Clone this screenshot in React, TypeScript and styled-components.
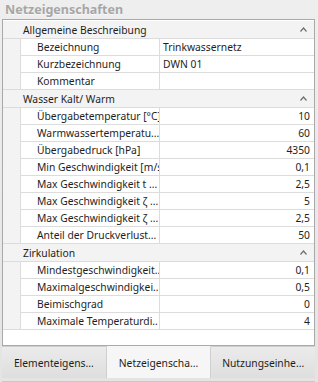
import React from "react";
import styled, { createGlobalStyle } from "styled-components";

interface Prop {
  name: string;
  value: string;
  align?: "left" | "right";
}

interface Category {
  title: string;
  props: Prop[];
}

const data: Category[] = [
  {
    title: "Allgemeine Beschreibung",
    props: [
      { name: "Bezeichnung", value: "Trinkwassernetz" },
      { name: "Kurzbezeichnung", value: "DWN 01" },
      { name: "Kommentar", value: "" },
    ],
  },
  {
    title: "Wasser Kalt/ Warm",
    props: [
      { name: "Übergabetemperatur [°C]", value: "10", align: "right" },
      { name: "Warmwassertemperatu...", value: "60", align: "right" },
      { name: "Übergabedruck [hPa]", value: "4350", align: "right" },
      { name: "Min Geschwindigkeit [m/s]", value: "0,1", align: "right" },
      { name: "Max Geschwindigkeit t ...", value: "2,5", align: "right" },
      { name: "Max Geschwindigkeit ζ ...", value: "5", align: "right" },
      { name: "Max Geschwindigkeit ζ ...", value: "2,5", align: "right" },
      { name: "Anteil der Druckverlust...", value: "50", align: "right" },
    ],
  },
  {
    title: "Zirkulation",
    props: [
      { name: "Mindestgeschwindigkeit..", value: "0,1", align: "right" },
      { name: "Maximalgeschwindigkei..", value: "0,5", align: "right" },
      { name: "Beimischgrad", value: "0", align: "right" },
      { name: "Maximale Temperaturdi..", value: "4", align: "right" },
    ],
  },
];

const tabs = ["Elementeigens...", "Netzeigenscha...", "Nutzungseinhe..."];

const GlobalStyle = createGlobalStyle`
  html, body {
    margin: 0;
    padding: 0;
    background: #e9e9e9;
  }
  body {
    font-family: "Noto Sans", "Open Sans", sans-serif;
    font-size: 10.3px;
    color: #1e1e1e;
  }
`;

const Window = styled.div`
  width: 318px;
  height: 382px;
  display: flex;
  flex-direction: column;
  background: linear-gradient(#eeeeee, #e4e4e4);
  overflow: hidden;
`;

const TitleBar = styled.div`
  height: 19px;
  flex-shrink: 0;
  display: flex;
  align-items: center;
  padding-left: 5px;
  font-weight: bold;
  font-size: 12.5px;
  color: #a6a6a6;
  text-shadow: 0 1px 0 #f8f8f8;
`;

const Panel = styled.div`
  flex: 1;
  margin: 0 3px 0 2px;
  border: 1px solid #a9a9a9;
  background: #ffffff;
  padding-top: 1px;
  overflow: hidden;
`;

const CategoryRow = styled.div`
  height: 17px;
  display: flex;
  align-items: center;
  padding-left: 20px;
  padding-right: 7px;
  background: #f3f3f3;
  border-bottom: 1px solid #dcdcdc;
`;

const CategoryTitle = styled.span`
  flex: 1;
  white-space: nowrap;
`;

const Chevron = styled.svg`
  width: 7px;
  height: 5px;
  flex-shrink: 0;
`;

const PropRow = styled.div`
  height: 17px;
  display: flex;
`;

const Gutter = styled.div<{ $last?: boolean }>`
  width: 17px;
  flex-shrink: 0;
  background: #f3f3f3;
  border-bottom: 1px solid ${(p) => (p.$last ? "#dcdcdc" : "transparent")};
`;

const NameCell = styled.div`
  width: 122px;
  flex-shrink: 0;
  padding-left: 16px;
  display: flex;
  align-items: center;
  border-left: 1px solid #dcdcdc;
  border-bottom: 1px solid #dcdcdc;
  white-space: nowrap;
  overflow: hidden;
`;

const ValueCell = styled.div<{ $align: "left" | "right" }>`
  flex: 1;
  display: flex;
  align-items: center;
  justify-content: ${(p) => (p.$align === "right" ? "flex-end" : "flex-start")};
  padding: 0 4px 0 3px;
  border-left: 1px solid #dcdcdc;
  border-bottom: 1px solid #dcdcdc;
  white-space: nowrap;
  overflow: hidden;
`;

const TabStrip = styled.div`
  height: 32px;
  flex-shrink: 0;
  display: flex;
  margin: 0 3px 0 2px;
  padding-bottom: 3px;
  border-bottom: 1px solid #c8c8c8;
`;

const Tab = styled.div<{ $active?: boolean }>`
  flex: 1;
  display: flex;
  align-items: center;
  justify-content: center;
  white-space: nowrap;
  border-right: 1px solid #cfcfcf;
  border-top: 1px solid ${(p) => (p.$active ? "transparent" : "#cfcfcf")};
  background: ${(p) =>
    p.$active ? "#f6f6f6" : "linear-gradient(#ebebeb, #dedede)"};
  &:last-child {
    border-right: none;
  }
`;

export default function App() {
  return (
    <>
      <GlobalStyle />
      <Window>
        <TitleBar>Netzeigenschaften</TitleBar>
        <Panel>
          {data.map((cat) => (
            <div key={cat.title}>
              <CategoryRow>
                <CategoryTitle>{cat.title}</CategoryTitle>
                <Chevron viewBox="0 0 7 5">
                  <polyline
                    points="0.5,4.5 3.5,1 6.5,4.5"
                    fill="none"
                    stroke="#6f6f6f"
                    strokeWidth="1.2"
                  />
                </Chevron>
              </CategoryRow>
              {cat.props.map((p, i) => (
                <PropRow key={cat.title + i}>
                  <Gutter $last={i === cat.props.length - 1} />
                  <NameCell>{p.name}</NameCell>
                  <ValueCell $align={p.align ?? "left"}>{p.value}</ValueCell>
                </PropRow>
              ))}
            </div>
          ))}
        </Panel>
        <TabStrip>
          {tabs.map((t, i) => (
            <Tab key={t} $active={i === 1}>
              {t}
            </Tab>
          ))}
        </TabStrip>
      </Window>
    </>
  );
}
